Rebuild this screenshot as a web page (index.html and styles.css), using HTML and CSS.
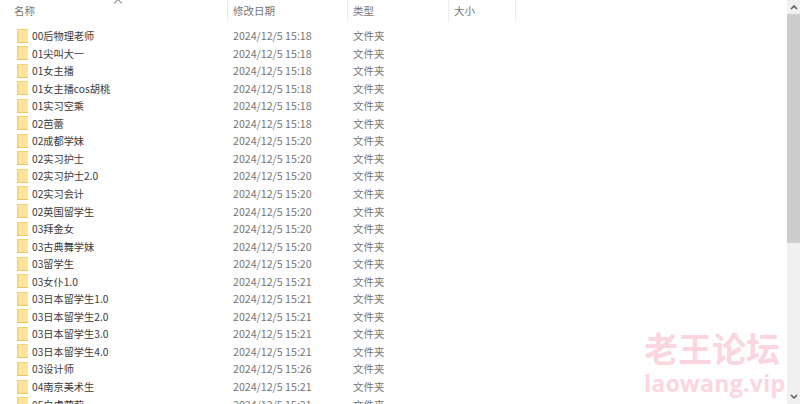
FILE: index.html
```html
<!DOCTYPE html>
<html lang="zh-CN">
<head>
    <meta charset="UTF-8">
    <title>文件夹</title>
    <link rel="stylesheet" href="styles.css">
</head>
<body>
<svg class="defs" width="0" height="0">
    <symbol id="folder" viewBox="0 0 11 14">
        <path d="M0 0h11v14H0z" fill="#f5d26f"/>
        <path d="M1.500 1h9.500v12.200H1.500z" fill="#fee49c"/>
        <path d="M0 13.500h11" stroke="#eec45f" stroke-width="1"/>
    </symbol>
</svg>
<div class="window">
    <div class="main">
        <div class="header">
            <span class="sort-arrow"></span>
            <div class="col col-name">名称</div>
            <div class="col col-date">修改日期</div>
            <div class="col col-type">类型</div>
            <div class="col col-size">大小</div>
        </div>
        <div class="list">
            <div class="row"><span class="name"><svg class="icon"><use href="#folder"/></svg>00后物理老师</span><span class="date">2024/12/5 15:18</span><span class="type">文件夹</span></div>
            <div class="row"><span class="name"><svg class="icon"><use href="#folder"/></svg>01尖叫大一</span><span class="date">2024/12/5 15:18</span><span class="type">文件夹</span></div>
            <div class="row"><span class="name"><svg class="icon"><use href="#folder"/></svg>01女主播</span><span class="date">2024/12/5 15:18</span><span class="type">文件夹</span></div>
            <div class="row"><span class="name"><svg class="icon"><use href="#folder"/></svg>01女主播cos胡桃</span><span class="date">2024/12/5 15:18</span><span class="type">文件夹</span></div>
            <div class="row"><span class="name"><svg class="icon"><use href="#folder"/></svg>01实习空乘</span><span class="date">2024/12/5 15:18</span><span class="type">文件夹</span></div>
            <div class="row"><span class="name"><svg class="icon"><use href="#folder"/></svg>02芭蕾</span><span class="date">2024/12/5 15:18</span><span class="type">文件夹</span></div>
            <div class="row"><span class="name"><svg class="icon"><use href="#folder"/></svg>02成都学妹</span><span class="date">2024/12/5 15:20</span><span class="type">文件夹</span></div>
            <div class="row"><span class="name"><svg class="icon"><use href="#folder"/></svg>02实习护士</span><span class="date">2024/12/5 15:20</span><span class="type">文件夹</span></div>
            <div class="row"><span class="name"><svg class="icon"><use href="#folder"/></svg>02实习护士2.0</span><span class="date">2024/12/5 15:20</span><span class="type">文件夹</span></div>
            <div class="row"><span class="name"><svg class="icon"><use href="#folder"/></svg>02实习会计</span><span class="date">2024/12/5 15:20</span><span class="type">文件夹</span></div>
            <div class="row"><span class="name"><svg class="icon"><use href="#folder"/></svg>02英国留学生</span><span class="date">2024/12/5 15:20</span><span class="type">文件夹</span></div>
            <div class="row"><span class="name"><svg class="icon"><use href="#folder"/></svg>03拜金女</span><span class="date">2024/12/5 15:20</span><span class="type">文件夹</span></div>
            <div class="row"><span class="name"><svg class="icon"><use href="#folder"/></svg>03古典舞学妹</span><span class="date">2024/12/5 15:20</span><span class="type">文件夹</span></div>
            <div class="row"><span class="name"><svg class="icon"><use href="#folder"/></svg>03留学生</span><span class="date">2024/12/5 15:20</span><span class="type">文件夹</span></div>
            <div class="row"><span class="name"><svg class="icon"><use href="#folder"/></svg>03女仆1.0</span><span class="date">2024/12/5 15:21</span><span class="type">文件夹</span></div>
            <div class="row"><span class="name"><svg class="icon"><use href="#folder"/></svg>03日本留学生1.0</span><span class="date">2024/12/5 15:21</span><span class="type">文件夹</span></div>
            <div class="row"><span class="name"><svg class="icon"><use href="#folder"/></svg>03日本留学生2.0</span><span class="date">2024/12/5 15:21</span><span class="type">文件夹</span></div>
            <div class="row"><span class="name"><svg class="icon"><use href="#folder"/></svg>03日本留学生3.0</span><span class="date">2024/12/5 15:21</span><span class="type">文件夹</span></div>
            <div class="row"><span class="name"><svg class="icon"><use href="#folder"/></svg>03日本留学生4.0</span><span class="date">2024/12/5 15:21</span><span class="type">文件夹</span></div>
            <div class="row"><span class="name"><svg class="icon"><use href="#folder"/></svg>03设计师</span><span class="date">2024/12/5 15:26</span><span class="type">文件夹</span></div>
            <div class="row"><span class="name"><svg class="icon"><use href="#folder"/></svg>04南京美术生</span><span class="date">2024/12/5 15:21</span><span class="type">文件夹</span></div>
            <div class="row"><span class="name"><svg class="icon"><use href="#folder"/></svg>05白虎萝莉</span><span class="date">2024/12/5 15:21</span><span class="type">文件夹</span></div>
        </div>
    </div>
    <div class="scrollbar">
        <div class="scroll-btn"><svg width="8" height="6" viewBox="0 0 8 6"><path d="M1 5l3-3 3 3" fill="none" stroke="#555" stroke-width="1.500"/></svg></div>
        <div class="thumb"></div>
        <div class="track"></div>
        <div class="scroll-btn"><svg width="8" height="6" viewBox="0 0 8 6"><path d="M1 1l3 3 3-3" fill="none" stroke="#555" stroke-width="1.500"/></svg></div>
    </div>
    <div class="watermark">
        <div class="wm-title">老王论坛</div>
        <div class="wm-url">laowang.vip</div>
    </div>
</div>
</body>
</html>
```

FILE: styles.css
```css
:root {
    --name-color: #3a3a3a;
    --muted-color: #757575;
    --line-color: #ececec;
}

html, body {
    margin: 0;
    height: 100%;
    overflow: hidden;
}

body {
    font-family: 'Noto Sans CJK SC', 'Noto Sans', sans-serif;
    font-size: 10.500px;
    color: var(--name-color);
    background-color: white;
}

.defs {
    position: absolute;
}

.window {
    position: relative;
    display: flex;
    height: 404px;
}

.main {
    flex: 1;
    min-width: 0;
}

.header {
    position: relative;
    display: flex;
    height: 22px;
    color: var(--muted-color);
}

.sort-arrow {
    position: absolute;
    left: 115px;
    top: 0;
    width: 5px;
    height: 5px;
    border-left: 1px solid #888;
    border-top: 1px solid #888;
    transform: rotate(45deg);
}

.col {
    box-sizing: border-box;
    padding-left: 5px;
    line-height: 21px;
    border-right: 1px solid var(--line-color);
}

.col-name {
    width: 228px;
    padding-left: 14px;
}

.col-date {
    width: 120px;
}

.col-type {
    width: 101px;
}

.col-size {
    width: 67px;
}

.list {
    padding-top: 4.800px;
}

.row {
    display: flex;
    align-items: center;
    height: 17.550px;
    white-space: nowrap;
}

.name {
    display: flex;
    align-items: center;
    width: 233px;
    padding-left: 17px;
    box-sizing: border-box;
    font-size: 10.200px;
}

.icon {
    width: 11px;
    height: 14px;
    margin-right: 4px;
    flex-shrink: 0;
}

.date {
    width: 120px;
    color: var(--muted-color);
    font-size: 10.650px;
}

.type {
    color: var(--muted-color);
}

.scrollbar {
    display: flex;
    flex-direction: column;
    width: 13px;
    background-color: #f0f0f0;
}

.scroll-btn {
    display: flex;
    align-items: center;
    justify-content: center;
    height: 14px;
}

.thumb {
    height: 229px;
    background-color: #cdcdcd;
}

.track {
    flex: 1;
}

.watermark {
    position: absolute;
    left: 644px;
    top: 327px;
    color: #fcd6df;
    font-weight: 700;
    white-space: nowrap;
    line-height: 1;
}

.wm-title {
    font-size: 34px;
    height: 41px;
    line-height: 41px;
}

.wm-url {
    font-family: 'Open Sans', sans-serif;
    font-size: 23px;
    letter-spacing: 0.300px;
    height: 31px;
    line-height: 31px;
}
```
